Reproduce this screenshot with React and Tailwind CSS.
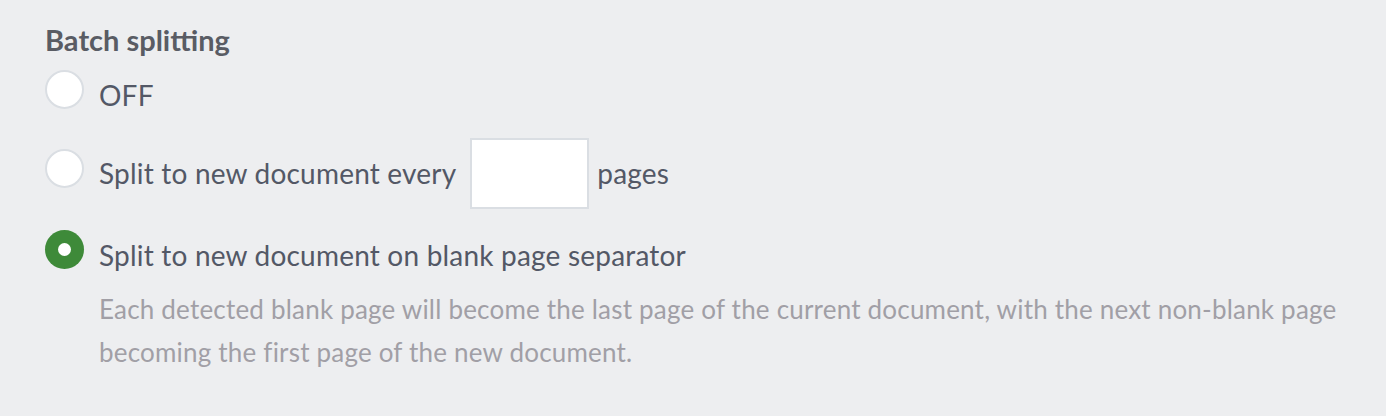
export default function App() {
  const font = { fontFamily: '"Lato", "Noto Sans", sans-serif' };
  return (
    <div className="w-[1386px] h-[416px] bg-[#edeef0] pl-[45px] pt-[24px]" style={font}>
      <div className="text-[29px] font-bold leading-[32px] text-[#595c64]">Batch splitting</div>
      <div className="flex flex-col">
        <label className="flex items-center h-[60px] mt-[9px]">
          <span className="w-[39px] h-[39px] rounded-full bg-white border-2 border-[#dadee3] mr-[15px] -mt-[11px] shrink-0" />
          <span className="text-[28px] tracking-[0.2px] text-[#535866]">OFF</span>
        </label>
        <label className="flex items-center h-[80px] mt-[8px]">
          <span className="w-[39px] h-[39px] rounded-full bg-white border-2 border-[#dadee3] mr-[15px] -mt-[10px] shrink-0" />
          <span className="text-[28px] tracking-[0.2px] text-[#535866]">Split to new document every</span>
          <span className="w-[119px] h-[71px] bg-white border-2 border-[#dadee3] ml-[14px] mr-[8px] shrink-0" />
          <span className="text-[28px] tracking-[0.2px] text-[#535866]">pages</span>
        </label>
        <label className="flex items-center h-[50px] mt-[17px]">
          <span className="w-[39px] h-[39px] rounded-full bg-[#3e8a39] mr-[15px] -mt-[12px] shrink-0 flex items-center justify-center">
            <span className="w-[13px] h-[13px] rounded-full bg-white" />
          </span>
          <span className="text-[28px] tracking-[0.2px] text-[#535866]">Split to new document on blank page separator</span>
        </label>
        <p className="ml-[54px] mt-[8px] text-[26px] tracking-[0.2px] leading-[43px] text-[#a19fa6]">
          Each detected blank page will become the last page of the current document, with the next non-blank page becoming the first page of the new document.
        </p>
      </div>
    </div>
  );
}
